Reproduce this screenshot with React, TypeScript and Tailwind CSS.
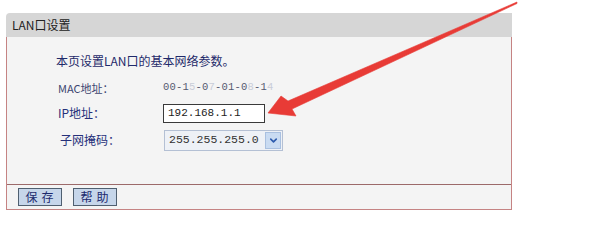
import { ChevronDown } from "lucide-react";

const cjk = "font-['Noto_Sans_CJK_SC','Noto_Sans',sans-serif]";
const mono = "font-['Liberation_Mono','DejaVu_Sans_Mono',monospace]";

export default function App() {
  return (
    <div className={`relative w-[600px] h-[241px] bg-white overflow-hidden ${cjk}`}>
      <div className="pt-[13px] pl-[6px]">
        <div className="w-[506px]">
          {/* header */}
          <div className="h-[24px] bg-[#d6d6d6] rounded-tl-[4px] pl-[6px] flex items-center text-[12px] text-[#222] leading-none">
            LAN口设置
          </div>

          {/* body */}
          <div className="border-x border-b border-[#c58383] bg-[#f4f4f4]">
            <div className="h-[147px] pl-[49px] pt-[16px]">
              <p className="h-[16px] text-[12px] leading-[16px] text-[#1f2a6a]">本页设置LAN口的基本网络参数。</p>

              <div className="mt-[9px] flex items-center h-[20px] pl-[2px]">
                <span className="w-[105px] text-[11px] text-[#3c4470]">MAC地址：</span>
                <span className={`${mono} text-[10.5px] text-[#555a70] tracking-[0.2px]`}>
                  00-1<span className="text-[#c8ccd8]">5</span>-0<span className="text-[#c8ccd8]">7</span>-01-0<span className="text-[#c8ccd8]">8</span>-1<span className="text-[#c8ccd8]">4</span>
                </span>
              </div>

              <div className="mt-[5px] flex items-center h-[20px] pl-[2px]">
                <span className="w-[105px] text-[12px] text-[#26307a]">IP地址：</span>
                <div className={`w-[102px] h-[19px] bg-white border border-[#3a3a3a] pl-[4px] flex items-center ${mono} text-[11px] text-[#222]`}>
                  192.168.1.1
                </div>
              </div>

              <div className="mt-[6px] flex items-center h-[22px] pl-[4px]">
                <span className="w-[104px] text-[12px] text-[#26307a]">子网掩码：</span>
                <div className="w-[119px] h-[21px] bg-[#eef1f6] border border-[#b4c0d4] flex items-center">
                  <span className={`flex-1 pl-[4px] ${mono} text-[11.5px] text-[#333]`}>255.255.255.0</span>
                  <span className="w-[16px] h-[17px] mr-[1px] bg-[#c9dbf2] border border-[#a9c0e0] flex items-center justify-center">
                    <ChevronDown className="w-[11px] h-[11px] text-[#2e5cae]" strokeWidth={3.5} />
                  </span>
                </div>
              </div>
            </div>

            {/* footer */}
            <div className="border-t border-[#9c6a6a] h-[25px] pl-[11px] flex items-center gap-[11px]">
              <button className="w-[44px] h-[18px] bg-[#c6d6ea] border border-[#4f5f70] text-[12px] leading-none text-[#1c2a6e] tracking-[4px] pl-[3px]">
                保存
              </button>
              <button className="w-[44px] h-[18px] bg-[#c6d6ea] border border-[#4f5f70] text-[12px] leading-none text-[#1c2a6e] tracking-[4px] pl-[3px]">
                帮助
              </button>
            </div>
          </div>
        </div>
      </div>

      {/* annotation arrow */}
      <svg className="absolute inset-0 pointer-events-none" width="600" height="241" viewBox="0 0 600 241">
        <polygon
          points="517,2 288,101 281,96 268,113 296,116 292,109 517,3.5"
          fill="#e83b36"
          stroke="#e83b36"
          strokeWidth="0.6"
          strokeLinejoin="round"
        />
      </svg>
    </div>
  );
}
